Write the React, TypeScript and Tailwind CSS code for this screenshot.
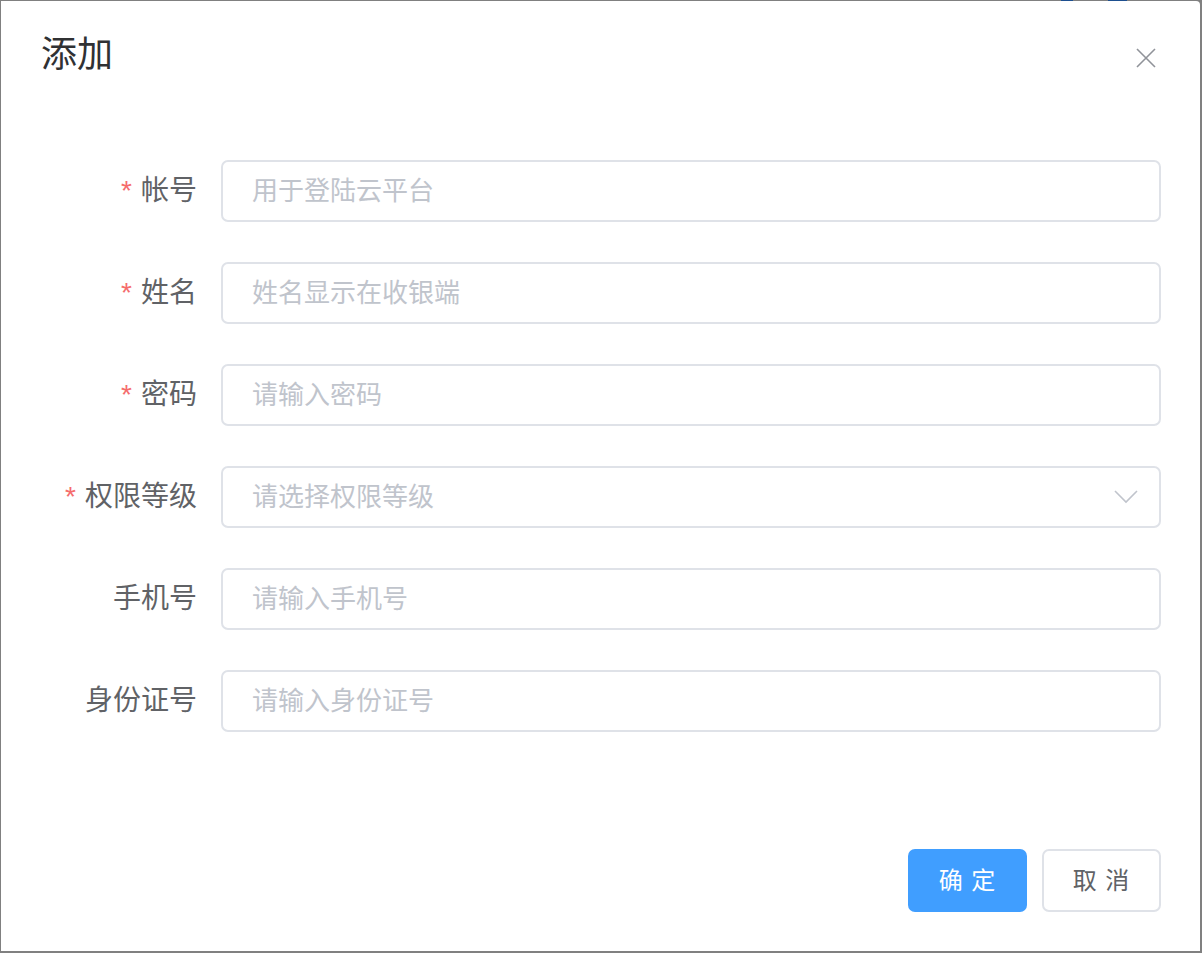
import React from "react";

const fields: { label: string; placeholder: string; required: boolean; select?: boolean }[] = [
  { label: "帐号", placeholder: "用于登陆云平台", required: true },
  { label: "姓名", placeholder: "姓名显示在收银端", required: true },
  { label: "密码", placeholder: "请输入密码", required: true },
  { label: "权限等级", placeholder: "请选择权限等级", required: true, select: true },
  { label: "手机号", placeholder: "请输入手机号", required: false },
  { label: "身份证号", placeholder: "请输入身份证号", required: false },
];

export default function App() {
  return (
    <div
      className="relative h-[953px] w-[1202px] bg-[#808080] pt-[1px] pl-[1px] pr-[2px] pb-[2px]"
      style={{ fontFamily: '"Liberation Sans", "Noto Sans CJK SC", sans-serif' }}
    >
      <span className="absolute left-[1061px] top-0 h-[1px] w-[12px] bg-[#1d4f8f]" />
      <span className="absolute left-[1108px] top-0 h-[1px] w-[19px] bg-[#1d4f8f]" />
      <div className="flex h-full flex-col rounded-tr-[4px] bg-white">
        <div className="flex items-start justify-between pl-[40px] pr-[44px] pt-[28px]">
          <div className="text-[36px] leading-[52px] text-[#303133]">添加</div>
          <button className="mt-[19px] flex h-[20px] w-[20px] items-center justify-center text-[#909399]">
            <svg width="20" height="20" viewBox="0 0 20 20" fill="none" stroke="currentColor" strokeWidth="1.6">
              <path d="M1 1 L19 19 M19 1 L1 19" />
            </svg>
          </button>
        </div>
        <div className="flex flex-col gap-[40px] pl-[40px] pr-[39px] pt-[79px]">
          {fields.map((f) => (
            <div key={f.label} className="flex items-center">
              <div className="flex w-[180px] shrink-0 items-center justify-end pr-[24px] text-[28px] text-[#606266]">
                {f.required && <span className="mr-[9px] text-[#f56c6c]">*</span>}
                <span>{f.label}</span>
              </div>
              <div className="flex h-[62px] flex-1 items-center justify-between rounded-[7px] border-2 border-[#dfe2e8] pl-[29px] pr-[21px] text-[26px] text-[#c0c4cc]">
                <span>{f.placeholder}</span>
                {f.select && (
                  <svg width="24" height="14" viewBox="0 0 24 14" fill="none" stroke="#c0c4cc" strokeWidth="1.6">
                    <path d="M1 1 L12 12 L23 1" />
                  </svg>
                )}
              </div>
            </div>
          ))}
        </div>
        <div className="mt-auto flex justify-end gap-[15px] pb-[39px] pr-[39px]">
          <button className="flex h-[63px] w-[119px] items-center justify-center rounded-[7px] bg-[#409eff] text-[24px] tracking-[1px] text-white">
            确 定
          </button>
          <button className="flex h-[63px] w-[119px] items-center justify-center rounded-[7px] border-2 border-[#dfe2e8] bg-white text-[24px] tracking-[1px] text-[#606266]">
            取 消
          </button>
        </div>
      </div>
    </div>
  );
}
